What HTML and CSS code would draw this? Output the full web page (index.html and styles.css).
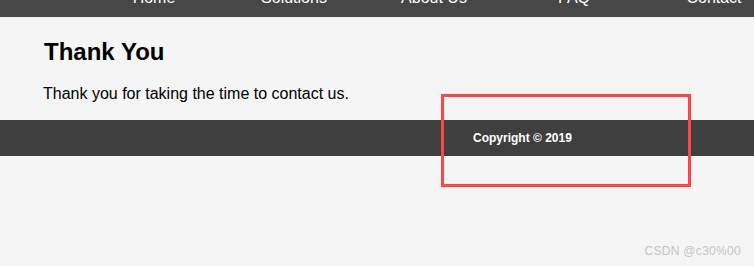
FILE: index.html
```html
<!DOCTYPE html>
<html lang="en">
<head>
<meta charset="utf-8">
<title>Thank You</title>
<link rel="stylesheet" href="styles.css">
</head>
<body>
<nav class="nav">
  <ul class="nav-list">
    <li class="nav-item">Home</li>
    <li class="nav-item">Solutions</li>
    <li class="nav-item">About Us</li>
    <li class="nav-item">FAQ</li>
    <li class="nav-item">Contact</li>
  </ul>
</nav>
<main class="content">
  <h1 class="title">Thank You</h1>
  <p class="message">Thank you for taking the time to contact us.</p>
</main>
<footer class="footer">
  <span class="copyright">Copyright © 2019</span>
</footer>
<div class="highlight"></div>
<div class="watermark">CSDN @c30%00</div>
</body>
</html>
```
FILE: styles.css
```css
html, body {
  margin: 0;
  padding: 0;
}
body {
  background: #f5f5f5;
  font-family: "Liberation Sans", Arial, sans-serif;
  color: #000;
  height: 266px;
  overflow: hidden;
  position: relative;
}
.nav {
  background: #474747;
  height: 17px;
  overflow: hidden;
}
.nav-list {
  list-style: none;
  margin: -11px 0 0 0;
  padding: 0 0 0 84px;
  display: flex;
  white-space: nowrap;
}
.nav-item {
  flex: 0 0 140px;
  text-align: center;
  color: #fff;
  font-size: 16px;
  line-height: 18px;
}
.content {
  padding: 0 0 0 43px;
}
.title {
  margin: 21px 0 0 1px;
  font-size: 24px;
  line-height: 28px;
  font-weight: bold;
}
.message {
  margin: 19px 0 17px 0;
  font-size: 16px;
  line-height: 18px;
}
.footer {
  background: #3f3f3f;
  height: 36px;
  padding-left: 473px;
}
.copyright {
  color: #fff;
  font-size: 12px;
  font-weight: bold;
  line-height: 36px;
}
.highlight {
  position: absolute;
  left: 441px;
  top: 94px;
  width: 244px;
  height: 87px;
  border: 3px solid #ff4646;
}
.watermark {
  position: absolute;
  right: 13px;
  top: 243px;
  font-size: 12px;
  line-height: 16px;
  color: #c4c4c4;
  letter-spacing: 0.3px;
}
```
